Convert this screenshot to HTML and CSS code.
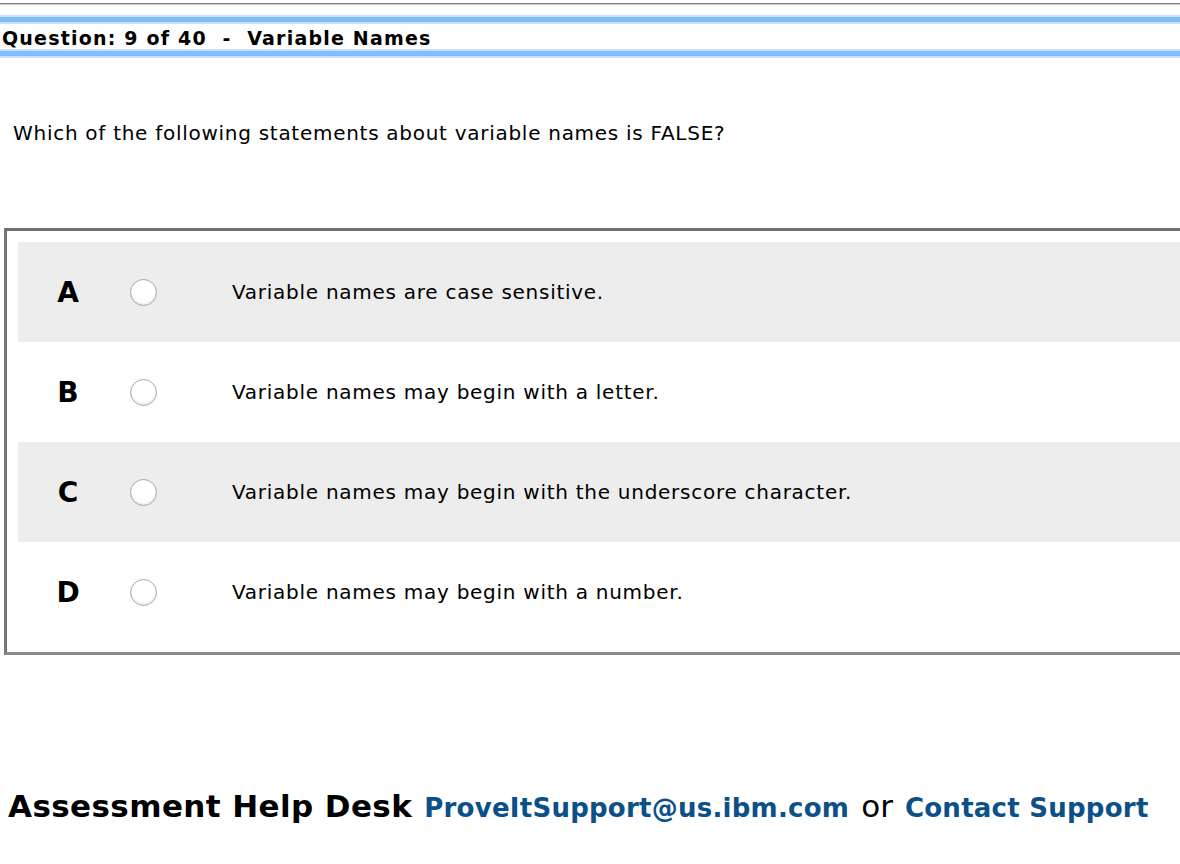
FILE: index.html
```html
<!DOCTYPE html>
<html>
<head>
<meta charset="utf-8">
<link rel="stylesheet" href="styles.css">
</head>
<body>
<div class="topline"></div>
<div class="band">
  <div class="bar"></div>
  <div class="title">Question: 9 of 40&nbsp;&nbsp;-&nbsp;&nbsp;Variable Names</div>
  <div class="bar"></div>
</div>
<p class="question">Which of the following statements about variable names is FALSE?</p>
<div class="options">
  <div class="opt shaded"><span class="letter">A</span><input class="radio" type="radio" name="q"><span class="text">Variable names are case sensitive.</span></div>
  <div class="opt"><span class="letter">B</span><input class="radio" type="radio" name="q"><span class="text">Variable names may begin with a letter.</span></div>
  <div class="opt shaded"><span class="letter">C</span><input class="radio" type="radio" name="q"><span class="text">Variable names may begin with the underscore character.</span></div>
  <div class="opt"><span class="letter">D</span><input class="radio" type="radio" name="q"><span class="text">Variable names may begin with a number.</span></div>
</div>
<div class="footer"><span class="desk">Assessment Help Desk</span><a class="link" href="#">ProveItSupport@us.ibm.com</a><span class="or">or</span><a class="link" href="#">Contact Support</a></div>
</body>
</html>
```
FILE: styles.css
```css
html, body {
  margin: 0;
  padding: 0;
  background: #fff;
}
body {
  font-family: "DejaVu Sans", Verdana, sans-serif;
  color: #000;
}
.topline {
  margin-top: 3px;
  height: 0;
  border-top: 1px solid #7d7f86;
  border-bottom: 1px solid #c8c8c8;
}
.band {
  margin-top: 10px;
}
.bar {
  height: 5px;
  background: #80bcf9;
  border-top: 2px solid #c9e1fb;
  border-bottom: 2px solid #c9e1fb;
}
.title {
  height: 25px;
  line-height: 28px;
  padding-left: 2px;
  font-size: 19px;
  letter-spacing: 1.2px;
  font-weight: bold;
  white-space: nowrap;
  overflow: hidden;
}
.question {
  margin: 63px 0 0 13px;
  line-height: 24px;
  font-size: 20px;
  letter-spacing: 0.72px;
}
.options {
  margin: 83px 0 0 4px;
  border: 3px solid #8a8a8a;
  border-top-color: #6f6f6f;
  border-left-color: #777;
  border-right: none;
  padding: 11px 0 10px 11px;
}
.opt {
  display: flex;
  align-items: center;
  height: 100px;
}
.opt.shaded {
  background: #ededed;
}
.letter {
  width: 100px;
  text-align: center;
  font-size: 28px;
  font-weight: bold;
}
.radio {
  appearance: none;
  -webkit-appearance: none;
  margin: 0 0 0 12px;
  width: 27px;
  height: 27px;
  border-radius: 50%;
  border: 1px solid #a9a9a9;
  background: radial-gradient(circle at 50% 40%, #ffffff 55%, #ececec 100%);
  box-shadow: inset 0 -1px 2px rgba(0,0,0,0.08);
}
.text {
  margin-left: 75px;
  font-size: 20px;
  letter-spacing: 0.73px;
}
.footer {
  margin: 131px 0 0 8px;
  line-height: 40px;
  white-space: nowrap;
  display: flex;
  align-items: baseline;
  gap: 12px;
}
.desk {
  font-size: 31px;
  letter-spacing: 0.4px;
  font-weight: bold;
}
.link {
  font-size: 26px;
  letter-spacing: 0.25px;
  font-weight: bold;
  color: #0b5088;
  text-decoration: none;
}
.or {
  font-size: 31px;
}
```
